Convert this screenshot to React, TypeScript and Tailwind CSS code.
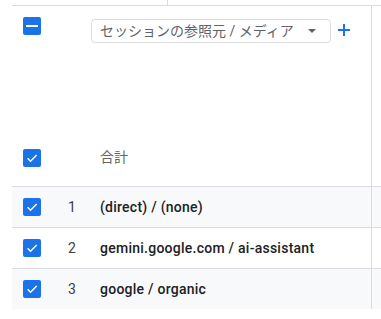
import React from 'react'

const rows = [
  { n: 1, label: '(direct) / (none)', bg: 'bg-[#f8f9fa]' },
  { n: 2, label: 'gemini.google.com / ai-assistant', bg: 'bg-white' },
  { n: 3, label: 'google / organic', bg: 'bg-[#f8f9fa]' },
]

function Checkbox({ minus }: { minus?: boolean }) {
  return (
    <div className="w-[18px] h-[18px] shrink-0 rounded-[2px] bg-[#1a73e8] flex items-center justify-center">
      {minus ? (
        <div className="w-[12px] h-[2px] bg-white" />
      ) : (
        <svg width="14" height="14" viewBox="0 0 24 24" fill="none">
          <path d="M4.5 12.5l5 5L20 7" stroke="white" strokeWidth="2.6" />
        </svg>
      )}
    </div>
  )
}

export default function App() {
  return (
    <div className="w-[381px] h-[319px] bg-white overflow-hidden font-['Roboto','Noto_Sans_CJK_JP',sans-serif]">
      <div className="h-[5px] pl-[167px]">
        <div className="h-full border-l border-[#dadce0]" />
      </div>

      <div className="ml-[12px] border-t border-[#dadce0]">
        {/* Header */}
        <div className="flex h-[181px] border-b border-[#dadce0]">
          <div className="w-[360px] border-r border-[#dadce0] flex flex-col">
            <div className="flex items-start pl-[11px] pt-[11px]">
              <Checkbox minus />
              <div className="ml-[50px] mt-[2px] w-[240px] h-[24px] rounded-[4px] border border-[#dadce0] flex items-center pl-[8px] pr-[14px]">
                <span className="text-[14px] text-[#5f6368] leading-none whitespace-nowrap">
                  セッションの参照元 / メディア
                </span>
                <div className="ml-auto w-0 h-0 border-l-[4px] border-r-[4px] border-t-[4px] border-l-transparent border-r-transparent border-t-[#5f6368]" />
              </div>
              <svg className="ml-[6px] mt-[6px]" width="14" height="14" viewBox="0 0 14 14">
                <path d="M7 1v12M1 7h12" stroke="#1a73e8" strokeWidth="2" />
              </svg>
            </div>
            <div className="mt-auto mb-[18px] pl-[11px] flex items-center">
              <Checkbox />
              <span className="ml-[59px] text-[14px] text-[#5f6368]">合計</span>
            </div>
          </div>
          <div className="flex-1" />
        </div>

        {/* Rows */}
        {rows.map((r, i) => (
          <div
            key={r.n}
            className={`flex ${r.bg} ${i < rows.length - 1 ? 'h-[41px] border-b border-[#dadce0]' : 'h-[40px]'}`}
          >
            <div className="w-[360px] border-r border-[#dadce0] flex items-center pl-[11px]">
              <Checkbox />
              <span className="ml-[19px] w-[24px] text-center text-[14px] text-[#3c4043]">{r.n}</span>
              <span className="ml-[16px] text-[14px] tracking-[0.25px] font-medium text-[#202124] whitespace-nowrap">{r.label}</span>
            </div>
            <div className="flex-1" />
          </div>
        ))}
      </div>
    </div>
  )
}
